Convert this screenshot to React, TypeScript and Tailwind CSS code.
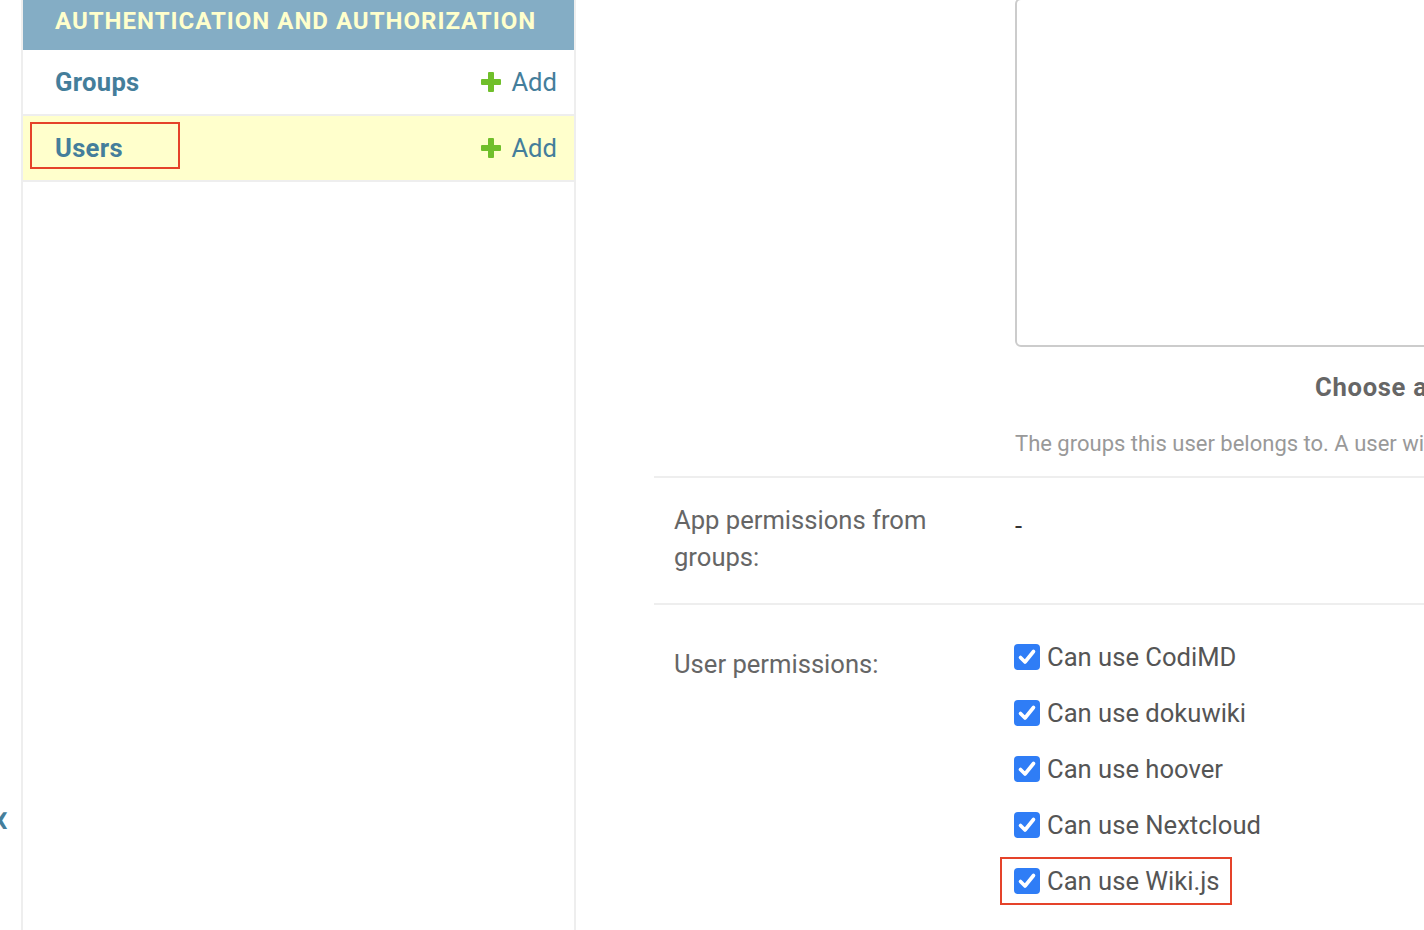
import React from "react";

const font = { fontFamily: "Roboto, 'Noto Sans', 'Liberation Sans', sans-serif" };

function Plus() {
  return (
    <svg width="20" height="20" viewBox="0 0 20 20" className="mr-[10px]">
      <rect x="7" y="0" width="6" height="20" rx="1" fill="#70bf2b" />
      <rect x="0" y="7" width="20" height="6" rx="1" fill="#70bf2b" />
    </svg>
  );
}

function Check() {
  return (
    <span className="w-[26px] h-[26px] rounded-[4px] bg-[#2f7df6] flex items-center justify-center shrink-0">
      <svg width="20" height="20" viewBox="0 0 20 20">
        <path d="M3.5 10.5 L8 15 L16.5 4.5" stroke="white" strokeWidth="3.6" fill="none" strokeLinecap="round" strokeLinejoin="round" />
      </svg>
    </span>
  );
}

const perms = ["Can use CodiMD", "Can use dokuwiki", "Can use hoover", "Can use Nextcloud", "Can use Wiki.js"];

export default function App() {
  return (
    <div className="w-[1424px] h-[930px] overflow-hidden flex bg-white text-[25.6px]" style={font}>
      {/* gutter */}
      <div className="w-[21px] shrink-0 overflow-hidden pt-[795px]">
        <span className="block ml-[-12px] text-[42px] leading-[46px] text-[#447e9b] font-bold">«</span>
      </div>

      {/* sidebar */}
      <div className="w-[555px] shrink-0 border-l-2 border-r-2 border-[#eeeeee] flex flex-col">
        <div className="h-[50px] bg-[#84adc5] flex items-end pb-[16px] pl-[32px]">
          <span className="text-[#ffffcc] font-bold text-[24px] leading-[26px] tracking-[1px] uppercase whitespace-nowrap">
            Authentication and Authorization
          </span>
        </div>
        <div className="h-[66px] border-b-2 border-[#eeeeee] flex items-center justify-between pl-[32px] pr-[17px]">
          <span className="font-bold text-[#447e9b] tracking-[0.3px]">Groups</span>
          <span className="flex items-center text-[#447e9b]"><Plus />Add</span>
        </div>
        <div className="h-[66px] border-b-2 border-[#eeeeee] bg-[#ffffcc] flex items-center justify-between pl-[32px] pr-[17px] relative">
          <span className="font-bold text-[#447e9b] tracking-[0.3px]">Users</span>
          <span className="flex items-center text-[#447e9b]"><Plus />Add</span>
          <div className="absolute left-[7px] top-[6px] w-[150px] h-[47px] border-2 border-[#e5432a]" />
        </div>
      </div>

      {/* main */}
      <div className="flex-1 min-w-0 pl-[78px] overflow-hidden">
        {/* row 1 */}
        <div className="border-b-2 border-[#eeeeee] pl-[361px] h-[480px]">
          <div className="w-[600px] h-[349px] mt-[-2px] border-2 border-[#cccccc] rounded-[6px]" />
          <div className="pl-[300px] mt-[25px] font-bold text-[#666666] whitespace-nowrap leading-[30px] tracking-[0.7px]">Choose all</div>
          <div className="mt-[28px] text-[22px] text-[#999999] whitespace-nowrap leading-[28px]">
            The groups this user belongs to. A user will get all permissions granted to each of their groups.
          </div>
        </div>

        {/* row 2 */}
        <div className="border-b-2 border-[#eeeeee] h-[127px] flex pt-[24px]">
          <div className="w-[361px] pl-[20px] shrink-0">
            <div className="w-[300px] text-[#666666] leading-[37px]">App permissions from groups:</div>
          </div>
          <div className="text-[#333333] leading-[37px] pt-[6px]">-</div>
        </div>

        {/* row 3 */}
        <div className="flex pt-[34px]">
          <div className="w-[361px] pl-[20px] shrink-0 pt-[7px]">
            <div className="text-[#666666] leading-[37px]">User permissions:</div>
          </div>
          <div className="flex flex-col gap-[19px] ml-[-1px]">
            {perms.map((p, i) => (
              <div key={p} className="flex items-center gap-[7px] h-[37px] relative whitespace-nowrap text-[#555555]">
                <span className="mt-[-2px]"><Check /></span>
                <span>{p}</span>
                {i === 4 && (
                  <div className="absolute left-[-14px] top-[-6px] w-[232px] h-[48px] border-2 border-[#e5432a]" />
                )}
              </div>
            ))}
          </div>
        </div>
      </div>
    </div>
  );
}
